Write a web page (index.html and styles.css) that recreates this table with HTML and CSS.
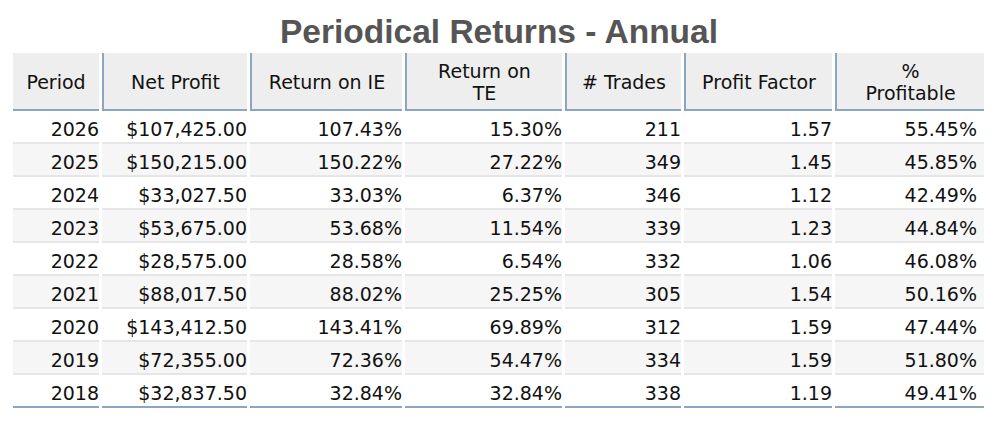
FILE: index.html
```html
<!DOCTYPE html>
<html>
<head>
<meta charset="utf-8">
<link rel="stylesheet" href="styles.css">
</head>
<body>
<div class="page">
  <h1 class="title">Periodical Returns - Annual</h1>
  <table class="returns">
    <thead>
      <tr>
        <th class="c-period first">Period</th>
        <th class="c-np">Net Profit</th>
        <th class="c-rie">Return on IE</th>
        <th class="c-rte">Return on<br>TE</th>
        <th class="c-tr"># Trades</th>
        <th class="c-pf">Profit Factor</th>
        <th class="c-pp">%<br>Profitable</th>
      </tr>
    </thead>
    <tbody>
      <tr><td>2026</td><td>$107,425.00</td><td>107.43%</td><td>15.30%</td><td>211</td><td>1.57</td><td class="last">55.45%</td></tr>
      <tr><td>2025</td><td>$150,215.00</td><td>150.22%</td><td>27.22%</td><td>349</td><td>1.45</td><td class="last">45.85%</td></tr>
      <tr><td>2024</td><td>$33,027.50</td><td>33.03%</td><td>6.37%</td><td>346</td><td>1.12</td><td class="last">42.49%</td></tr>
      <tr><td>2023</td><td>$53,675.00</td><td>53.68%</td><td>11.54%</td><td>339</td><td>1.23</td><td class="last">44.84%</td></tr>
      <tr><td>2022</td><td>$28,575.00</td><td>28.58%</td><td>6.54%</td><td>332</td><td>1.06</td><td class="last">46.08%</td></tr>
      <tr><td>2021</td><td>$88,017.50</td><td>88.02%</td><td>25.25%</td><td>305</td><td>1.54</td><td class="last">50.16%</td></tr>
      <tr><td>2020</td><td>$143,412.50</td><td>143.41%</td><td>69.89%</td><td>312</td><td>1.59</td><td class="last">47.44%</td></tr>
      <tr><td>2019</td><td>$72,355.00</td><td>72.36%</td><td>54.47%</td><td>334</td><td>1.59</td><td class="last">51.80%</td></tr>
      <tr><td>2018</td><td>$32,837.50</td><td>32.84%</td><td>32.84%</td><td>338</td><td>1.19</td><td class="last">49.41%</td></tr>
    </tbody>
  </table>
</div>
</body>
</html>
```

FILE: styles.css
```css
html, body {
  margin: 0;
  padding: 0;
  background: #ffffff;
}

.page {
  width: 1000px;
  padding-left: 10px;
  box-sizing: border-box;
}

.title {
  margin: 13px 0 2px 0;
  padding-right: 12px;
  font-family: "Liberation Sans", Arial, sans-serif;
  font-weight: bold;
  font-size: 33.5px;
  line-height: 38px;
  color: #555555;
  text-align: center;
}

.returns {
  border-collapse: separate;
  border-spacing: 3px 0;
  table-layout: fixed;
  width: 977px;
  font-family: "DejaVu Sans", Verdana, sans-serif;
  font-size: 19px;
  color: #111111;
}

.returns th {
  box-sizing: border-box;
  height: 58px;
  padding: 2px 2px 0 2px;
  background: #eeeeee;
  border-left: 2px solid #8ba6c1;
  border-bottom: 2px solid #8ba6c1;
  font-weight: normal;
  line-height: 22px;
  text-align: center;
  vertical-align: middle;
}

.returns th.first {
  border-left: none;
}

.c-period { width: 86px; }
.c-np { width: 145px; }
.c-rie { width: 152px; }
.c-rte { width: 157px; }
.c-tr { width: 116px; }
.c-pf { width: 148px; }
.c-pp { width: 149px; }

.returns td {
  box-sizing: border-box;
  height: 33px;
  padding: 7px 0 2px 0;
  line-height: 22px;
  text-align: right;
  white-space: nowrap;
  border-bottom: 2px solid #e6e6e6;
  background: #ffffff;
}

.returns td.last {
  padding-right: 7px;
}

.returns tbody tr:nth-child(even) td {
  background: #f6f6f6;
}

.returns tbody tr:last-child td {
  border-bottom: 2px solid #8ba6c1;
}
```
